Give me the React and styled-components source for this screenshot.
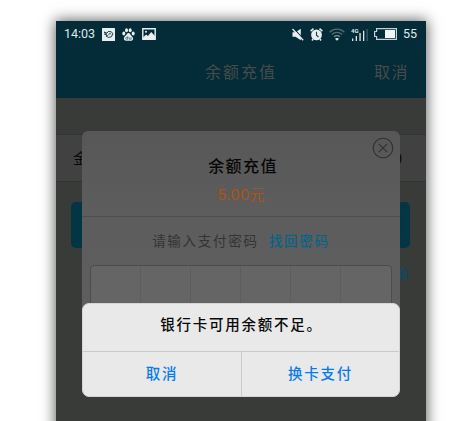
import React from 'react';
import styled, { createGlobalStyle } from 'styled-components';

const Global = createGlobalStyle`
  * { box-sizing: border-box; }
  body { margin: 0; background: #fff; overflow: hidden; }
  svg { display: block; }
`;

const hand = `font-family: "Noto Sans CJK SC", sans-serif; font-style: normal;`;

const Page = styled.div`
  width: 469px;
  height: 421px;
  padding: 21px 43px 0 56px;
  overflow: hidden;
  background: #fff;
`;

const Phone = styled.div`
  position: relative;
  width: 370px;
  height: 420px;
  background: #393b39;
  box-shadow: 0 0 13px 1px rgba(0, 0, 0, 0.62);
  ${hand}
`;

const Header = styled.header`
  height: 77px;
  background: #032b38;
`;

const StatusBar = styled.div`
  display: flex;
  align-items: center;
  justify-content: space-between;
  height: 26px;
  padding: 0 8px;
  color: #dfe7e9;
  font: 13px/26px Roboto, sans-serif;
`;

const StatusGroup = styled.div`
  display: flex;
  align-items: center;
  gap: ${(p) => p.$gap}px;
`;

const Clock = styled.span`
  width: 31px;
  font-size: 12.5px;
`;

const Percent = styled.span`
  width: 15px;
  font-size: 12.5px;
`;

const NavBar = styled.div`
  display: grid;
  grid-template-columns: 1fr auto 1fr;
  align-items: center;
  height: 50px;
  padding: 0 17px 2px 0;
  color: #474b4b;
  font-size: 16px;
  line-height: 24px;
`;

const NavTitle = styled.span`
  grid-column: 2;
  padding-left: 17px;
  letter-spacing: 2px;
`;

const NavAction = styled.span`
  justify-self: end;
  letter-spacing: 1.5px;
`;

const Screen = styled.main`
  padding-top: 36px;
  background: #393b39;
`;

const FormRow = styled.div`
  display: flex;
  align-items: center;
  justify-content: space-between;
  height: 48px;
  padding: 0 24px 2px 17px;
  border-top: 1px solid #323534;
  border-bottom: 1px solid #323534;
  background: #404140;
  color: #080808;
  font-size: 15px;
`;

const Submit = styled.div`
  height: 46px;
  margin: 20px 16px 14px 15px;
  border-radius: 5px;
  background: #033644;
`;

const RowLink = styled.div`
  padding-right: 17px;
  color: #084c60;
  font-size: 14px;
  line-height: 22px;
  text-align: right;
  height: 150px;
`;

const Dialog = styled.section`
  position: absolute;
  left: 26px;
  top: 110px;
  width: 318px;
  height: 264px;
  border-radius: 6px;
  background: linear-gradient(#575757, #5d5d5d 30%, #5f5f5f);
  text-align: center;
`;

const DialogHead = styled.div`
  height: 86px;
  padding: 21px 0 0 4px;
  border-bottom: 1px solid #4c4f51;
`;

const DialogTitle = styled.div`
  color: #080808;
  font-size: 16px;
  font-weight: 500;
  line-height: 26px;
  letter-spacing: 1.4px;
`;

const Amount = styled.div`
  padding-right: 4px;
  color: #a9551a;
  font: 15px/33px Inter, "Noto Sans CJK SC", sans-serif;
  letter-spacing: 0.2px;
`;

const Close = styled.svg`
  position: absolute;
  right: 6px;
  top: 6px;
`;

const Prompt = styled.div`
  display: flex;
  justify-content: center;
  gap: 10px;
  height: 48px;
  color: #343434;
  font-size: 13.5px;
  line-height: 46px;
  letter-spacing: 1.75px;
`;

const PromptLink = styled.span`
  color: #076487;
  font-weight: 500;
`;

const PinField = styled.div`
  display: grid;
  grid-template-columns: repeat(6, 1fr);
  width: 302px;
  height: 50px;
  margin-left: 8px;
  border: 1px solid #4c4c4c;
  border-radius: 4px;
  background: #656565;
`;

const PinCell = styled.div`
  border-right: 1px solid #5d5d5d;
  &:last-child { border-right: 0; }
`;

const Alert = styled.section`
  position: absolute;
  left: 26px;
  top: 282px;
  width: 318px;
  height: 94px;
  border: 1px solid #d5d5d5;
  border-radius: 7px;
  background: #e9e9e9;
  color: #080808;
  overflow: hidden;
`;

const AlertMessage = styled.p`
  height: 48px;
  margin: 0;
  padding-left: 1px;
  border-bottom: 1px solid #c9cbcb;
  font-size: 14.5px;
  font-weight: 500;
  line-height: 39px;
  letter-spacing: 1.75px;
  text-align: center;
`;

const AlertActions = styled.div`
  display: grid;
  grid-template-columns: 159px 1fr;
  height: 45px;
`;

const AlertButton = styled.button`
  border: 0;
  border-right: ${(p) => (p.$divider ? '1px solid #c9cbcb' : '0')};
  padding: 0 0 4px;
  background: transparent;
  color: #087bea;
  font-family: inherit;
  font-size: 14.5px;
  font-weight: 500;
  letter-spacing: 1.7px;
`;

function BirdIcon() {
  return (
    <svg width="13" height="13" viewBox="0 0 13 13">
      <rect width="13" height="13" rx=".5" fill="#e9eff0" />
      <path d="M2 4 5 5.2 6.2 3.5 9 3.7 11 5.5 9.4 8.8 6.4 9.4 4 8 5.6 7.7 2.4 6.1 4.8 6.2Z" fill="none" stroke="#1d4350" strokeWidth="1" />
      <path d="m6.4 6.7 1.8-1.4.8 1.2" fill="none" stroke="#1d4350" />
    </svg>
  );
}

function PawIcon() {
  return (
    <svg width="13" height="13" viewBox="0 0 13 13" fill="#e9eff0">
      <ellipse cx="1.8" cy="5.6" rx="1.5" ry="2" />
      <ellipse cx="4.5" cy="2.2" rx="1.5" ry="2" />
      <ellipse cx="8.2" cy="2.2" rx="1.5" ry="2" />
      <ellipse cx="11.2" cy="5.5" rx="1.5" ry="2" />
      <path d="M6.5 5C5 5 4.6 7 3.2 8.1 0.7 10.4 2.1 13 4.3 12.7h4.4c2.4.3 3.5-2.4 1.1-4.5C8.5 7.1 8 5 6.5 5Z" />
      <path d="M5.8 8.2v3H4.4c-1 0-1-1.7 0-1.7h1.4M7.3 9.2v2h1.9v-2" fill="none" stroke="#31515c" strokeWidth=".7" />
    </svg>
  );
}

function PictureIcon() {
  return (
    <svg width="14" height="12" viewBox="0 0 14 12">
      <path d="M.8.8h12.4v10.4H.8Z" fill="none" stroke="#e9eff0" strokeWidth="1.4" />
      <path d="m1 9.5 3.1-3 1.8 1.4L9.2 4 13 8v3H1Z" fill="#e9eff0" />
      <circle cx="4" cy="3.7" r="1" fill="#e9eff0" />
    </svg>
  );
}

function MuteIcon() {
  return (
    <svg width="12" height="13" viewBox="0 0 12 13">
      <path d="M.5 4.3h3L8.8.8v11.4L3.5 8.7h-3Z" fill="#e9eff0" />
      <path d="m1.8.7 10.3 11" stroke="#032b38" strokeWidth="1.2" />
      <path d="m.5 1 10.7 11.2" stroke="#e9eff0" strokeWidth="1.3" />
    </svg>
  );
}

function AlarmIcon() {
  return (
    <svg width="13" height="13" viewBox="0 0 13 13">
      <circle cx="6.5" cy="6.9" r="5.4" fill="#e9eff0" />
      <path d="M.6 3.1 3.5.7M12.4 3.1 9.5.7M3 11l-1 1.5M10 11l1 1.5" stroke="#e9eff0" strokeWidth="1.5" />
      <path d="M6.5 3.8v3.4l2 1.8" fill="none" stroke="#183d49" strokeWidth="1.1" />
    </svg>
  );
}

function WifiIcon() {
  return (
    <svg width="16" height="13" viewBox="0 0 16 13" fill="none">
      <path d="M.6 4.2c4.2-4 10.6-4 14.8 0M2.8 6.5c3-2.8 7.4-2.8 10.4 0" stroke="#526d76" strokeWidth="1.2" />
      <path d="M5 8.8c1.8-1.5 4.2-1.5 6 0" stroke="#7c9198" strokeWidth="1.2" />
      <path d="M6 10.8c1.2-1 2.8-1 4 0l-2 2Z" fill="#e9eff0" />
    </svg>
  );
}

const Signal = styled.div`
  position: relative;
  width: 17px;
  height: 13px;
`;

const Network = styled.span`
  position: absolute;
  left: 0;
  top: -1px;
  font: bold 6px/7px Roboto, sans-serif;
`;

function SignalBars() {
  return (
    <Signal>
      <Network>4G</Network>
      <svg width="17" height="13" viewBox="0 0 17 13" fill="#dfe7e9">
        <path d="M1 10.5h1.3V13H1zM4.7 8H6v5H4.7zM8.4 5h1.3v8H8.4zM12 2.7h1.3V13H12z" />
        <path d="M15.6 1h1v12h-1z" fill="#526d76" />
      </svg>
    </Signal>
  );
}

function BatteryIcon() {
  return (
    <svg width="23" height="12" viewBox="0 0 23 12">
      <path d="M2.6.6h19.8v10.8H2.6V8.5h-2v-5h2Z" fill="none" stroke="#c5d2d5" strokeWidth="1.2" />
      <path d="M11 2h10v8H11z" fill="#f0f5f5" />
    </svg>
  );
}

export default function App() {
  return (
    <Page>
      <Global />
      <Phone>
        <Header>
          <StatusBar>
            <StatusGroup $gap={7}>
              <Clock>14:03</Clock>
              <BirdIcon /><PawIcon /><PictureIcon />
            </StatusGroup>
            <StatusGroup $gap={6}>
              <MuteIcon /><AlarmIcon /><WifiIcon /><SignalBars /><BatteryIcon />
              <Percent>55</Percent>
            </StatusGroup>
          </StatusBar>
          <NavBar>
            <NavTitle>余额充值</NavTitle>
            <NavAction>取消</NavAction>
          </NavBar>
        </Header>
        <Screen>
          <FormRow><span>金</span><span>0</span></FormRow>
          <Submit />
          <RowLink>值</RowLink>
        </Screen>
        <Dialog>
          <DialogHead>
            <DialogTitle>余额充值</DialogTitle>
            <Amount>5.00元</Amount>
          </DialogHead>
          <Close width="22" height="22" viewBox="0 0 22 22" fill="none" stroke="#303030">
            <circle cx="11" cy="11" r="9.8" strokeWidth="1.1" />
            <path d="m6.8 6.8 8.4 8.4m0-8.4-8.4 8.4" strokeWidth="1.1" />
          </Close>
          <Prompt>
            <span>请输入支付密码</span>
            <PromptLink>找回密码</PromptLink>
          </Prompt>
          <PinField>
            {[0, 1, 2, 3, 4, 5].map((n) => <PinCell key={n} />)}
          </PinField>
        </Dialog>
        <Alert>
          <AlertMessage>银行卡可用余额不足。</AlertMessage>
          <AlertActions>
            <AlertButton $divider>取消</AlertButton>
            <AlertButton>换卡支付</AlertButton>
          </AlertActions>
        </Alert>
      </Phone>
    </Page>
  );
}
